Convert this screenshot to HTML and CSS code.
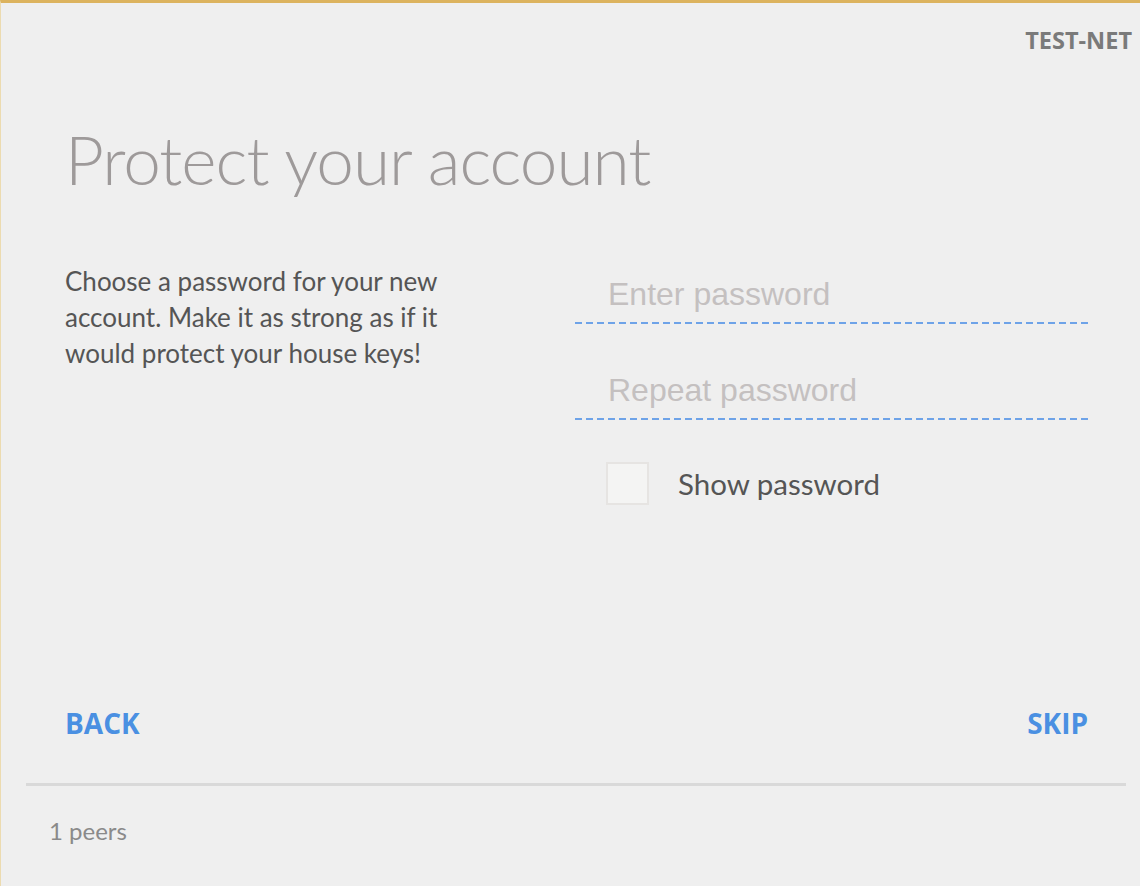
FILE: index.html
```html
<!DOCTYPE html>
<html lang="en">
<head>
<meta charset="utf-8">
<title>Protect your account</title>
<link rel="stylesheet" href="styles.css">
</head>
<body>
<div class="app">
  <header class="topbar">
    <span class="network">TEST-NET</span>
  </header>
  <main class="content">
    <h1 class="title">Protect your account</h1>
    <div class="columns">
      <p class="intro">Choose a password for your new account. Make it as strong as if it would protect your house keys!</p>
      <form class="form">
        <input class="field" type="password" placeholder="Enter password">
        <input class="field" type="password" placeholder="Repeat password">
        <label class="check">
          <span class="box"></span>
          <span class="check-label">Show password</span>
        </label>
      </form>
    </div>
  </main>
  <nav class="actions">
    <a class="btn">BACK</a>
    <a class="btn">SKIP</a>
  </nav>
  <footer class="status">
    <span class="peers">1 peers</span>
  </footer>
</div>
</body>
</html>
```

FILE: styles.css
```css
* { box-sizing: border-box; }
html, body { margin: 0; padding: 0; }
body {
  background: #efefef;
  font-family: "Open Sans", "Liberation Sans", sans-serif;
  color: #555;
}
.app {
  width: 1140px;
  height: 886px;
  border-top: 3px solid #dcb35e;
  border-left: 1px solid #ecdbb0;
  display: flex;
  flex-direction: column;
}
.topbar {
  display: flex;
  justify-content: flex-end;
  padding: 23px 8px 0 0;
  height: 60px;
}
.network {
  font-family: "Open Sans", sans-serif;
  font-weight: 700;
  font-size: 23.5px;
  line-height: 28px;
  color: #7a7a7a;
}
.content {
  padding: 0 0 0 64px;
  flex: 1;
}
.title {
  margin: 56px 0 0 0;
  font-family: "Lato", sans-serif;
  font-weight: 300;
  font-size: 67.5px;
  line-height: 80px;
  color: #9e9a9a;
  letter-spacing: -1px;
}
.columns {
  display: grid;
  grid-template-columns: 510px 513px;
  margin-top: 64px;
}
.intro {
  margin: 0;
  font-family: "Lato", sans-serif;
  font-size: 26px;
  line-height: 36px;
  color: #555;
  width: 400px;
}
.form {
  display: flex;
  flex-direction: column;
}
.field {
  width: 513px;
  height: 61px;
  border: 0;
  padding: 2px 0 0 33px;
  font-family: "Liberation Sans", Arial, sans-serif;
  font-size: 32px;
  color: #444;
  background: linear-gradient(to right, #6ea3e8 7px, transparent 7px) left bottom / 11px 2px repeat-x;
  outline: none;
  margin-top: 0;
}
.field + .field { margin-top: 35px; }
.field::placeholder { color: #c4c0c0; }
.check {
  display: flex;
  align-items: center;
  margin-top: 42px;
  padding-left: 31px;
}
.box {
  width: 43px;
  height: 43px;
  background: #f4f4f3;
  border: 2px solid #e6e4e2;
}
.check-label {
  margin-left: 29px;
  font-family: "Lato", sans-serif;
  font-size: 29.5px;
  color: #555;
}
.actions {
  display: flex;
  justify-content: space-between;
  align-items: flex-start;
  height: 80px;
  border-bottom: 3px solid #d9d9d9;
  margin: 0 14px 4px 25px;
  padding: 3px 38px 0 39px;
}
.btn {
  font-family: "Open Sans", sans-serif;
  font-weight: 700;
  font-size: 28px;
  color: #4a90e2;
  line-height: 28px;
  cursor: pointer;
}
.status {
  height: 96px;
  padding: 26px 0 0 48px;
}
.peers {
  font-family: "Lato", sans-serif;
  font-size: 24px;
  color: #8a8a8a;
}
```
